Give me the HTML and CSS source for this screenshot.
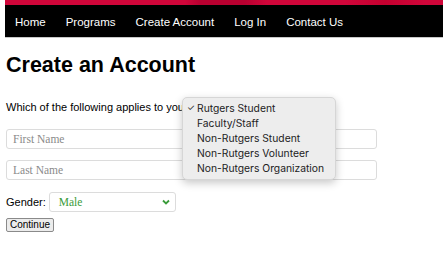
FILE: index.html
```html
<!DOCTYPE html>
<html>
<head>
<meta charset="utf-8">
<link rel="stylesheet" href="styles.css">
</head>
<body>
<header class="top">
  <div class="banner"></div>
  <nav class="nav">
    <a class="nav-item" href="#">Home</a>
    <a class="nav-item" href="#">Programs</a>
    <a class="nav-item" href="#">Create Account</a>
    <a class="nav-item" href="#">Log In</a>
    <a class="nav-item" href="#">Contact Us</a>
  </nav>
</header>
<main class="content">
  <h1 class="title">Create an Account</h1>
  <div class="question">
    Which of the following applies to you?
    <div class="popup">
      <div class="opt"><span class="check">✓</span>Rutgers Student</div>
      <div class="opt"><span class="check"></span>Faculty/Staff</div>
      <div class="opt"><span class="check"></span>Non-Rutgers Student</div>
      <div class="opt"><span class="check"></span>Non-Rutgers Volunteer</div>
      <div class="opt"><span class="check"></span>Non-Rutgers Organization</div>
    </div>
  </div>
  <div class="field">First Name</div>
  <div class="field field-gap">Last Name</div>
  <div class="gender-row">
    <span class="gender-label">Gender:</span>
    <div class="gender-select">
      <span class="gender-value">Male</span>
      <svg class="chev" width="8" height="6" viewBox="0 0 8 6"><path d="M1 1.5 L4 4.5 L7 1.5" fill="none" stroke="#3a9c3a" stroke-width="1.8"/></svg>
    </div>
  </div>
  <button class="btn">Continue</button>
</main>
</body>
</html>
```
FILE: styles.css
```css
html, body {
  margin: 0;
  padding: 0;
  background: #fff;
}
body {
  font-family: "Liberation Sans", Arial, sans-serif;
  color: #000;
}
.top {
  margin: 0 3px 0 5px;
}
.banner {
  height: 5px;
  background: linear-gradient(90deg, #d0063a 0px, #d0063a 180px, #b80030 195px, #b80030 240px, #d0063a 262px, #d0063a 340px, #c4002f 380px, #d0063a 420px);
}
.nav {
  display: flex;
  height: 32px;
  align-items: center;
  background: #000;
  border-bottom: 1px solid #c8c8c8;
}
.nav-item {
  color: #fff;
  text-decoration: none;
  font-size: 11.5px;
  padding: 0 10px;
  line-height: 32px;
  padding-top: 1px;
}
.content {
  padding: 0 6px;
}
.title {
  margin: 14px 0 0;
  font-size: 21.5px;
  line-height: 26px;
  font-weight: bold;
}
.question {
  position: relative;
  margin-top: 21px;
  font-size: 11px;
  line-height: 16px;
}
.popup {
  position: absolute;
  left: 176px;
  top: -2px;
  width: 152px;
  padding: 2px 0 4px;
  background: #ededed;
  border: 1px solid #d6d6d6;
  border-radius: 5px;
  box-shadow: 0 3px 8px rgba(0,0,0,0.22);
  font-family: Inter, "Noto Sans", sans-serif;
  font-size: 10.3px;
  color: #222;
  z-index: 5;
}
.opt {
  display: flex;
  align-items: center;
  height: 15px;
}
.check {
  width: 14px;
  padding-left: 4px;
  font-size: 9px;
  box-sizing: border-box;
}
.field {
  margin-top: 14px;
  width: 371px;
  height: 20px;
  box-sizing: border-box;
  border: 1px solid #dcdcdc;
  border-radius: 3px;
  padding-left: 6px;
  font-family: "Liberation Serif", serif;
  font-size: 11.5px;
  line-height: 18px;
  color: #8a8a8a;
}
.field-gap {
  margin-top: 11px;
}
.gender-row {
  display: flex;
  align-items: center;
  margin-top: 12px;
  gap: 3px;
}
.gender-label {
  font-size: 11px;
}
.gender-select {
  display: flex;
  align-items: center;
  justify-content: space-between;
  width: 127px;
  height: 20px;
  box-sizing: border-box;
  border: 1px solid #dcdcdc;
  border-radius: 3px;
  padding: 0 5px 0 9px;
}
.gender-value {
  font-family: "Liberation Serif", serif;
  font-size: 11.5px;
  color: #3a9c3a;
}
.btn {
  display: block;
  margin-top: 6px;
  height: 14px;
  padding: 0 3px;
  font-family: "Liberation Sans", Arial, sans-serif;
  font-size: 10px;
  line-height: 12px;
  background: #ececec;
  border: 1px solid #8a8a8a;
  border-radius: 2px;
  color: #000;
}
```
